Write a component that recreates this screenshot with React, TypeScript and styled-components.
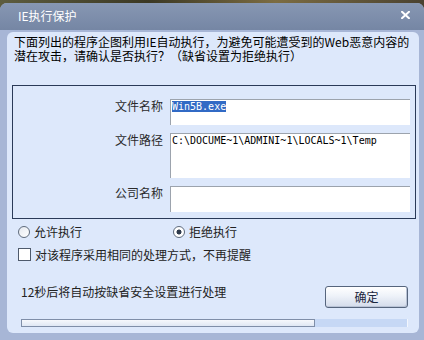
import React from "react"
import styled, { createGlobalStyle } from "styled-components"

const GlobalStyle = createGlobalStyle`
    html, body {
        margin: 0;
        padding: 0;
    }
    body {
        width: 424px;
        height: 340px;
        overflow: hidden;
        font-family: "Noto Sans CJK SC", "Liberation Sans", sans-serif;
    }
`

const Desktop = styled.div`
    width: 424px;
    height: 340px;
    padding-top: 3px;
    box-sizing: border-box;
    background: linear-gradient(90deg, #5d5c3e, #3b3824 35%, #7c6c42 65%, #4a4231);
`

const Janela = styled.div`
    height: 337px;
    display: flex;
    flex-direction: column;
    background: #a7b6d6;
    border-radius: 7px 7px 0 0;
    overflow: hidden;
`

const BarraTitulo = styled.div`
    height: 27px;
    flex: none;
    box-sizing: border-box;
    display: flex;
    align-items: center;
    justify-content: space-between;
    padding: 0 14px 3px 18px;
    background: linear-gradient(#8797b3, #7586a4);
    color: #fff;
    font-size: 12px;
`

const Moldura = styled.div`
    flex: 1;
    display: flex;
    padding: 2px 5px 7px 7px;
`

const Painel = styled.div`
    flex: 1;
    display: flex;
    flex-direction: column;
    padding: 3px 3px 0 5px;
    background: #dde8fb;
    border-radius: 6px;
`

const Aviso = styled.p`
    margin: 0 0 0 2px;
    font-size: 12px;
    line-height: 14px;
    color: #000;
    white-space: nowrap;
`

const Grupo = styled.div`
    width: 404px;
    box-sizing: border-box;
    margin-top: 22px;
    border: 1px solid #2a3a58;
    padding: 13px 5px 6px 0;
    display: grid;
    grid-template-columns: 1fr 240px;
    column-gap: 7px;
    row-gap: 8px;
`

const Rotulo = styled.div`
    text-align: right;
    font-size: 12px;
    line-height: 14px;
    color: #2b2b2b;
`

const Campo = styled.div<{ $altura: number }>`
    height: ${p => p.$altura}px;
    box-sizing: border-box;
    background: #fff;
    border-top: 1px solid #9ca3ad;
    border-left: 1px solid #9ca3ad;
    padding: 1px 0 0 1px;
    font-family: "DejaVu Sans Mono", "Liberation Mono", monospace;
    font-size: 10px;
    line-height: 12px;
    color: #000;
`

const Selecionado = styled.span`
    background: #316ac5;
    color: #fff;
`

const LinhaOpcoes = styled.div`
    display: flex;
    margin: 6px 0 0 6px;
    height: 13px;
    align-items: center;
`

const Opcao = styled.label<{ $largura?: number }>`
    display: flex;
    align-items: center;
    gap: 4px;
    width: ${p => (p.$largura ? `${p.$largura}px` : "auto")};
    font-size: 12px;
    line-height: 13px;
    color: #222;
`

const Radio = styled.span<{ $marcado?: boolean }>`
    width: 12px;
    height: 12px;
    box-sizing: border-box;
    border-radius: 50%;
    border: 1px solid #5f6b7c;
    background: ${p =>
        p.$marcado
            ? "radial-gradient(circle, #2e3a4c 0 2.2px, #fff 2.8px)"
            : "linear-gradient(135deg, #e4e8ef, #fff)"};
`

const Caixa = styled.span`
    width: 13px;
    height: 13px;
    box-sizing: border-box;
    border: 1px solid #4e5a6c;
    background: #fff;
`

const LinhaCaixa = styled.div`
    display: flex;
    margin: 10px 0 0 6px;
`

const Rodape = styled.div`
    display: flex;
    justify-content: space-between;
    align-items: flex-start;
    margin: 24px 8px 0 9px;
`

const Contagem = styled.div`
    font-size: 12px;
    line-height: 13px;
    color: #222;
`

const Botao = styled.button`
    width: 83px;
    height: 22px;
    margin-top: 1px;
    box-sizing: border-box;
    border: 1px solid #56657d;
    border-radius: 3px;
    background: linear-gradient(#ffffff, #eef2f9 45%, #d3dbea);
    box-shadow: inset -1px -1px 0 #b9c3d6;
    font-family: "Noto Sans CJK SC", sans-serif;
    font-size: 12px;
    line-height: 12px;
    color: #1b2740;
    padding: 0;
`

const Progresso = styled.div`
    margin: 11px 8px 0 9px;
    height: 8px;
    display: flex;
    background: #c6d8f5;
    border-right: 1px solid #f2f6fd;
`

const Preenchido = styled.div`
    height: 8px;
    box-sizing: border-box;
    border: 1px solid #7f8ea8;
    background: linear-gradient(#f6f8fc, #dfe7f4);
`

const Fechar = () => (
    <svg width="9" height="8" viewBox="0 0 9 8">
        <path d="M1 0.8 L8 7.2 M8 0.8 L1 7.2" stroke="#fff" strokeWidth="2" strokeLinecap="square" />
    </svg>
)

export default function App() {
    const segundos = 12
    const progresso = 294 / 386

    return (
        <Desktop>
            <GlobalStyle />
            <Janela>
                <BarraTitulo>
                    <span>IE执行保护</span>
                    <Fechar />
                </BarraTitulo>
                <Moldura>
                    <Painel>
                        <Aviso>
                            下面列出的程序企图利用IE自动执行，为避免可能遭受到的Web恶意内容的
                            <br />
                            潜在攻击，请确认是否执行？（缺省设置为拒绝执行）
                        </Aviso>
                        <Grupo>
                            <Rotulo>文件名称</Rotulo>
                            <Campo $altura={26}>
                                <Selecionado>Win5B.exe</Selecionado>
                            </Campo>
                            <Rotulo>文件路径</Rotulo>
                            <Campo $altura={45}>C:\DOCUME~1\ADMINI~1\LOCALS~1\Temp</Campo>
                            <Rotulo>公司名称</Rotulo>
                            <Campo $altura={26} />
                        </Grupo>
                        <LinhaOpcoes>
                            <Opcao $largura={155}>
                                <Radio />
                                允许执行
                            </Opcao>
                            <Opcao>
                                <Radio $marcado />
                                拒绝执行
                            </Opcao>
                        </LinhaOpcoes>
                        <LinhaCaixa>
                            <Opcao>
                                <Caixa />
                                对该程序采用相同的处理方式，不再提醒
                            </Opcao>
                        </LinhaCaixa>
                        <Rodape>
                            <Contagem>{segundos}秒后将自动按缺省安全设置进行处理</Contagem>
                            <Botao>确定</Botao>
                        </Rodape>
                        <Progresso>
                            <Preenchido style={{ width: `${progresso * 100}%` }} />
                        </Progresso>
                    </Painel>
                </Moldura>
            </Janela>
        </Desktop>
    )
}
